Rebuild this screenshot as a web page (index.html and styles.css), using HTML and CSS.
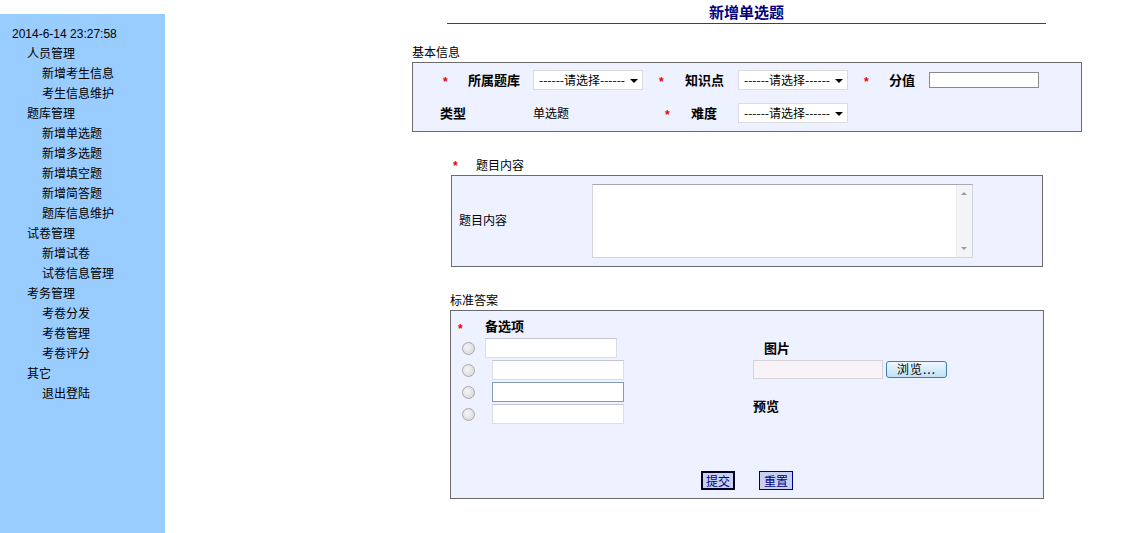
FILE: index.html
```html
<!DOCTYPE html>
<html lang="zh-CN">
<head>
  <meta charset="UTF-8">
  <title>新增单选题</title>
  <link rel="stylesheet" href="styles.css">
</head>
<body>
  <div class="page">
    <div class="sidebar">
      <div class="clock">2014-6-14 23:27:58</div>
      <ul class="menu">
        <li class="group">人员管理</li>
        <li>新增考生信息</li>
        <li>考生信息维护</li>
        <li class="group">题库管理</li>
        <li>新增单选题</li>
        <li>新增多选题</li>
        <li>新增填空题</li>
        <li>新增简答题</li>
        <li>题库信息维护</li>
        <li class="group">试卷管理</li>
        <li>新增试卷</li>
        <li>试卷信息管理</li>
        <li class="group">考务管理</li>
        <li>考卷分发</li>
        <li>考卷管理</li>
        <li>考卷评分</li>
        <li class="group">其它</li>
        <li>退出登陆</li>
      </ul>
    </div>

    <div class="content">
      <h1 class="title">新增单选题</h1>

      <div class="caption">基本信息</div>
      <div class="box basic">
        <div class="row row1">
          <span class="star w25">*</span>
          <span class="label w65">所属题库</span>
          <div class="select">------请选择------<span class="arrow"></span></div>
          <span class="star w26">*</span>
          <span class="label w53">知识点</span>
          <div class="select">------请选择------<span class="arrow"></span></div>
          <span class="star w25">*</span>
          <span class="label w40">分值</span>
          <input type="text" class="score">
        </div>
        <div class="row row2">
          <span class="label w93">类型</span>
          <span class="text w132">单选题</span>
          <span class="star w26">*</span>
          <span class="label w47">难度</span>
          <div class="select">------请选择------<span class="arrow"></span></div>
        </div>
      </div>

      <div class="caption caption2"><span class="star">*</span>题目内容</div>
      <div class="box question">
        <span class="q-label">题目内容</span>
        <div class="textarea">
          <div class="scroll">
            <span class="up"></span>
            <span class="down"></span>
          </div>
        </div>
      </div>

      <div class="caption caption3">标准答案</div>
      <div class="box answer">
        <div class="answer-top">
          <div class="options">
            <div class="opt-head"><span class="star">*</span><span class="label">备选项</span></div>
            <div class="opt first"><span class="radio"></span><input type="text" class="opt-input"></div>
            <div class="opt"><span class="radio"></span><input type="text" class="opt-input"></div>
            <div class="opt"><span class="radio"></span><input type="text" class="opt-input focus"></div>
            <div class="opt"><span class="radio"></span><input type="text" class="opt-input"></div>
          </div>
          <div class="picture">
            <div class="label pic-label">图片</div>
            <div class="file">
              <span class="file-text"></span>
              <span class="file-btn">浏览...</span>
            </div>
            <div class="label preview">预览</div>
          </div>
        </div>
        <div class="actions">
          <button class="btn submit">提交</button>
          <button class="btn">重置</button>
        </div>
      </div>
    </div>
  </div>
</body>
</html>
```

FILE: styles.css
```css
* {
  box-sizing: border-box;
}

body {
  margin: 0;
  font-family: "Noto Sans CJK SC", "Liberation Sans", sans-serif;
  font-size: 12px;
  color: #000;
  background: #fff;
}

.page {
  display: flex;
  align-items: flex-start;
}

/* sidebar */
.sidebar {
  width: 165px;
  min-height: 519px;
  margin-top: 14px;
  padding: 12px 0 0 12px;
  background: #99ccff;
}

.clock {
  font-family: "Liberation Sans", sans-serif;
  font-size: 12px;
  line-height: 17px;
}

.menu {
  list-style: none;
  margin: 0;
  padding: 0;
}

.menu li {
  line-height: 20px;
  padding-left: 30px;
}

.menu li.group {
  padding-left: 15px;
}

/* main */
.content {
  width: 670px;
  margin-left: 247px;
}

.title {
  margin: 0 36px 0 35px;
  height: 24px;
  padding-top: 2px;
  font-size: 15px;
  line-height: 20px;
  font-weight: bold;
  text-align: center;
  color: #000080;
  border-bottom: 1px solid #334466;
}

.caption {
  line-height: 16px;
  margin-top: 20px;
  height: 18px;
}

.caption2 {
  margin: 25px 0 0 39px;
  height: 18px;
}

.caption2 .star {
  display: inline-block;
  width: 25px;
  padding-left: 2px;
}

.caption3 {
  margin: 21px 0 0 38px;
  height: 22px;
  padding-top: 4px;
}

.box {
  background: #eef1ff;
  border: 1px solid #6b6b6b;
}

.star {
  color: #ee0000;
  font-weight: bold;
  font-family: "Liberation Sans", sans-serif;
}

.label {
  font-weight: bold;
  font-size: 13px;
}

/* basic info */
.basic {
  padding-bottom: 2px;
}

.row {
  display: flex;
  align-items: center;
  height: 33px;
}

.row .star {
  padding-top: 4px;
}

.row1 {
  padding-left: 30px;
}

.row2 {
  padding-left: 27px;
}

.w25 { width: 25px; }
.w26 { width: 26px; }
.w40 { width: 40px; }
.w47 { width: 47px; }
.w53 { width: 53px; }
.w65 { width: 65px; }
.w93 { width: 93px; }
.w132 { width: 132px; }

.select {
  position: relative;
  width: 110px;
  height: 20px;
  margin-right: 16px;
  padding: 0 14px 0 5px;
  line-height: 18px;
  background: #fff;
  border: 1px solid #dcdcdc;
  white-space: nowrap;
  overflow: hidden;
}

.arrow {
  position: absolute;
  right: 4px;
  top: 8px;
  border-left: 4px solid transparent;
  border-right: 4px solid transparent;
  border-top: 4px solid #000;
}

.score {
  width: 110px;
  height: 16px;
  margin: 0;
  border: 1px solid #888;
  background: #fff;
}

/* question */
.question {
  margin-left: 39px;
  width: 592px;
  height: 92px;
  display: flex;
  align-items: center;
  padding-left: 7px;
}

.q-label {
  width: 133px;
  margin-bottom: 3px;
}

.textarea {
  position: relative;
  width: 381px;
  height: 74px;
  background: #fff;
  border: 1px solid #d4d4dc;
  border-top-color: #a8a8b4;
}

.scroll {
  position: absolute;
  right: 0;
  top: 0;
  bottom: 0;
  width: 16px;
  background: #f4f4f6;
  border-left: 1px solid #ececf0;
}

.up,
.down {
  position: absolute;
  left: 4px;
  border-left: 3px solid transparent;
  border-right: 3px solid transparent;
}

.up {
  top: 7px;
  border-bottom: 3px solid #9a9a9a;
}

.down {
  bottom: 7px;
  border-top: 3px solid #9a9a9a;
}

/* answers */
.answer {
  margin-left: 38px;
  width: 594px;
  height: 189px;
  padding: 8px 0 0 0;
}

.answer-top {
  display: flex;
  height: 152px;
}

.options {
  width: 302px;
  padding-left: 11px;
}

.opt-head {
  display: flex;
  align-items: flex-start;
  height: 18px;
}

.opt-head .label {
  line-height: 14px;
}

.opt-head .star {
  width: 27px;
  margin-left: -4px;
  line-height: 14px;
  padding-top: 3px;
}

.opt {
  display: flex;
  align-items: center;
  height: 22px;
}

.radio {
  width: 13px;
  height: 13px;
  border-radius: 50%;
  border: 1px solid #a9a9a9;
  background: radial-gradient(circle at 40% 40%, #f6f6f6, #d2d2d2);
  margin-right: 10px;
}

.opt-input {
  width: 132px;
  height: 20px;
  margin: 0 0 0 7px;
  border: 1px solid #dadde6;
  border-top-color: #c2c5cf;
  background: #fff;
}

.first .opt-input {
  margin-left: 0;
}

.opt-input.focus {
  border-color: #7f9db9;
}

.picture {
  padding-top: 20px;
}

.pic-label {
  margin-left: 11px;
  line-height: 18px;
}

.file {
  display: flex;
  align-items: center;
  margin-top: 3px;
}

.file-text {
  width: 130px;
  height: 19px;
  background: #f7f3f6;
  border: 1px solid #d6d3da;
}

.file-btn {
  width: 61px;
  height: 17px;
  margin-left: 3px;
  line-height: 14px;
  text-align: center;
  letter-spacing: 1px;
  border: 1px solid #3c7fb1;
  border-radius: 3px;
  background: linear-gradient(#f0f8ff, #bfe0f7);
}

.preview {
  margin-top: 17px;
}

.actions {
  display: flex;
  justify-content: center;
  gap: 24px;
}

.btn {
  width: 34px;
  height: 19px;
  padding: 0;
  font-family: "Noto Sans CJK SC", sans-serif;
  font-size: 12px;
  line-height: 16px;
  color: #000080;
  background: #c8d0f0;
  border: 1px solid #000080;
}

.btn.submit {
  border: 2px solid #000022;
}
```
